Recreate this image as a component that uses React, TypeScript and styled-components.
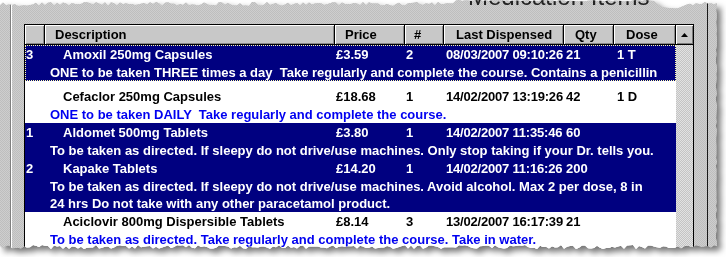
import React from "react";
import styled, { createGlobalStyle } from "styled-components";

const GlobalStyle = createGlobalStyle`
  body {
    margin: 0;
    background: #fff;
  }
`;

const COLS = "20px 290px 70px 39px 120px 50px 62px";
const SHEET_W = 717;
const SHEET_H = 251;

// pseudo random jitter for the torn paper edge
const rnd = (i: number) => {
  const s = Math.sin(i * 127.1 + 311.7) * 43758.5453;
  return s - Math.floor(s);
};

const tornEdge = (w: number, h: number) => {
  const pts: string[] = [];
  for (let x = 0, i = 0; x < w; x += 3, i++) {
    let y = 2 + rnd(i) * 4;
    if (x > 455 && x < 655) y = rnd(i) * 1.5;
    if (x >= 655 && x <= 690) y = 3 + Math.sin(((x - 655) / 35) * Math.PI) * 5 + rnd(i);
    pts.push(`${x}px ${y.toFixed(1)}px`);
  }
  pts.push(`${w}px 3px`);
  for (let y = 6, i = 0; y < h - 6; y += 4, i++) {
    pts.push(`${(w - rnd(i + 500) * 1.2).toFixed(1)}px ${y}px`);
  }
  for (let x = w, i = 0; x >= 0; x -= 3, i++) {
    const y = h - 6 + rnd(i + 900) * 4;
    pts.push(`${x}px ${y.toFixed(1)}px`);
  }
  pts.push(`0px ${h - 4}px`);
  return pts.join(", ");
};

const TORN = tornEdge(SHEET_W, SHEET_H);

const Stage = styled.div`
  width: 726px;
  height: 257px;
  background: #fff;
  overflow: hidden;
`;

const Shadow = styled.div`
  width: ${SHEET_W}px;
  height: ${SHEET_H}px;
  filter: drop-shadow(4px 4px 3px rgba(0, 0, 0, 0.55));
`;

const Sheet = styled.div`
  height: 100%;
  display: flex;
  padding-left: 10px;
  box-sizing: border-box;
  background-color: #c6c6c6;
  background-image: repeating-conic-gradient(#cecece 0 25%, #bebebe 0 50%);
  background-size: 2px 2px;
  clip-path: polygon(${TORN});
`;

const GroupBox = styled.div`
  position: relative;
  width: 698px;
  box-sizing: border-box;
  border-left: 1px solid #808080;
  border-right: 1px solid #1a1a1a;
  box-shadow: inset 1px 0 0 #fff;
  padding: 24px 0 0 13px;
  display: flex;
`;

const Caption = styled.div`
  position: absolute;
  left: 457px;
  top: -17px;
  font: 24px "Liberation Sans", Arial, sans-serif;
  color: #222;
  white-space: nowrap;
`;

const Grid = styled.div`
  width: 670px;
  box-sizing: border-box;
  border: 1px solid #000;
  border-bottom: none;
  background: #fff;
  display: flex;
  overflow: hidden;
  font: bold 13px "Liberation Sans", Arial, sans-serif;
`;

const DataArea = styled.div`
  width: 651px;
  display: flex;
  flex-direction: column;
`;

const HeaderRow = styled.div`
  display: grid;
  grid-template-columns: ${COLS};
  height: 20px;
  box-sizing: border-box;
  border-bottom: 1px solid #000;
`;

const HeaderCell = styled.div<{ $pad: number }>`
  background: #c8c8c8;
  border-right: 1px solid #000;
  box-shadow: inset 1px 1px 0 #fff, inset -1px -1px 0 #8a8a8a;
  padding-left: ${(p) => p.$pad}px;
  line-height: 19px;
  color: #000;
  white-space: nowrap;
  overflow: hidden;
`;

const Row = styled.div<{ $sel: boolean; $focus: boolean; $h: number; $top: number }>`
  height: ${(p) => p.$h}px;
  box-sizing: border-box;
  padding-top: ${(p) => p.$top}px;
  background: ${(p) => (p.$sel ? "#000080" : "#fff")};
  color: ${(p) => (p.$sel ? "#fff" : "#000")};
  outline: ${(p) => (p.$focus ? "1px dotted #ffffa8" : "none")};
  outline-offset: -1px;
  overflow: hidden;
  flex: none;
`;

const RowMain = styled.div`
  display: grid;
  grid-template-columns: ${COLS};
  height: 18px;
  line-height: 18px;
`;

const Cell = styled.div<{ $pad: number; $tight?: boolean }>`
  padding-left: ${(p) => p.$pad}px;
  letter-spacing: ${(p) => (p.$tight ? "-0.2px" : "normal")};
  white-space: nowrap;
`;

const Directions = styled.div<{ $sel: boolean }>`
  margin-left: 25px;
  line-height: 17px;
  white-space: pre;
  color: ${(p) => (p.$sel ? "#fff" : "#0000f0")};
`;

const Scrollbar = styled.div`
  width: 17px;
  display: flex;
  flex-direction: column;
  background-color: #d6d6d6;
  background-image: repeating-conic-gradient(#e2e2e2 0 25%, #c4c4c4 0 50%);
  background-size: 2px 2px;
`;

const UpButton = styled.div`
  height: 20px;
  box-sizing: border-box;
  background: #c8c8c8;
  border-bottom: 1px solid #000;
  box-shadow: inset 1px 1px 0 #fff, inset -1px -1px 0 #7a7a7a;
  display: flex;
  align-items: center;
  justify-content: center;
`;

type Item = {
  no: string;
  name: string;
  price: string;
  count: string;
  last: string;
  qty: string;
  dose: string;
  lines: string[];
  sel: boolean;
  focus?: boolean;
  h: number;
  top: number;
};

const headers: [string, number][] = [
  ["", 0],
  ["Description", 10],
  ["Price", 10],
  ["#", 9],
  ["Last Dispensed", 12],
  ["Qty", 11],
  ["Dose", 12],
];

const items: Item[] = [
  {
    no: "3",
    name: "Amoxil 250mg Capsules",
    price: "£3.59",
    count: "2",
    last: "08/03/2007 09:10:26",
    qty: "21",
    dose: "1 T",
    lines: ["ONE to be taken THREE times a day  Take regularly and complete the course. Contains a penicillin"],
    sel: true,
    focus: true,
    h: 36,
    top: 1,
  },
  {
    no: "",
    name: "Cefaclor 250mg Capsules",
    price: "£18.68",
    count: "1",
    last: "14/02/2007 13:19:26",
    qty: "42",
    dose: "1 D",
    lines: ["ONE to be taken DAILY  Take regularly and complete the course."],
    sel: false,
    h: 42,
    top: 7,
  },
  {
    no: "1",
    name: "Aldomet 500mg Tablets",
    price: "£3.80",
    count: "1",
    last: "14/02/2007 11:35:46",
    qty: "60",
    dose: "",
    lines: ["To be taken as directed. If sleepy do not drive/use machines. Only stop taking if your Dr. tells you."],
    sel: true,
    h: 36,
    top: 1,
  },
  {
    no: "2",
    name: "Kapake Tablets",
    price: "£14.20",
    count: "1",
    last: "14/02/2007 11:16:26",
    qty: "200",
    dose: "",
    lines: [
      "To be taken as directed. If sleepy do not drive/use machines. Avoid alcohol. Max 2 per dose, 8 in",
      "24 hrs Do not take with any other paracetamol product.",
    ],
    sel: true,
    h: 53,
    top: 1,
  },
  {
    no: "",
    name: "Aciclovir 800mg Dispersible Tablets",
    price: "£8.14",
    count: "3",
    last: "13/02/2007 16:17:39",
    qty: "21",
    dose: "",
    lines: ["To be taken as directed. Take regularly and complete the course. Take in water."],
    sel: false,
    h: 40,
    top: 1,
  },
];

const App = () => {
  return (
    <Stage>
      <GlobalStyle />
      <Shadow>
        <Sheet>
          <GroupBox>
            <Caption>Medication Items</Caption>
            <Grid>
              <DataArea>
                <HeaderRow>
                  {headers.map(([label, pad], i) => (
                    <HeaderCell key={i} $pad={pad}>
                      {label}
                    </HeaderCell>
                  ))}
                </HeaderRow>
                {items.map((it) => (
                  <Row key={it.name} $sel={it.sel} $focus={!!it.focus} $h={it.h} $top={it.top}>
                    <RowMain>
                      <Cell $pad={1}>{it.no}</Cell>
                      <Cell $pad={18}>{it.name}</Cell>
                      <Cell $pad={1}>{it.price}</Cell>
                      <Cell $pad={1}>{it.count}</Cell>
                      <Cell $pad={2} $tight>
                        {it.last}
                      </Cell>
                      <Cell $pad={2}>{it.qty}</Cell>
                      <Cell $pad={3}>{it.dose}</Cell>
                    </RowMain>
                    {it.lines.map((line) => (
                      <Directions key={line} $sel={it.sel}>
                        {line}
                      </Directions>
                    ))}
                  </Row>
                ))}
              </DataArea>
              <Scrollbar>
                <UpButton>
                  <svg width="7" height="4" viewBox="0 0 7 4">
                    <polygon points="3.5,0 7,4 0,4" fill="#000" />
                  </svg>
                </UpButton>
              </Scrollbar>
            </Grid>
          </GroupBox>
        </Sheet>
      </Shadow>
    </Stage>
  );
};

export default App;
